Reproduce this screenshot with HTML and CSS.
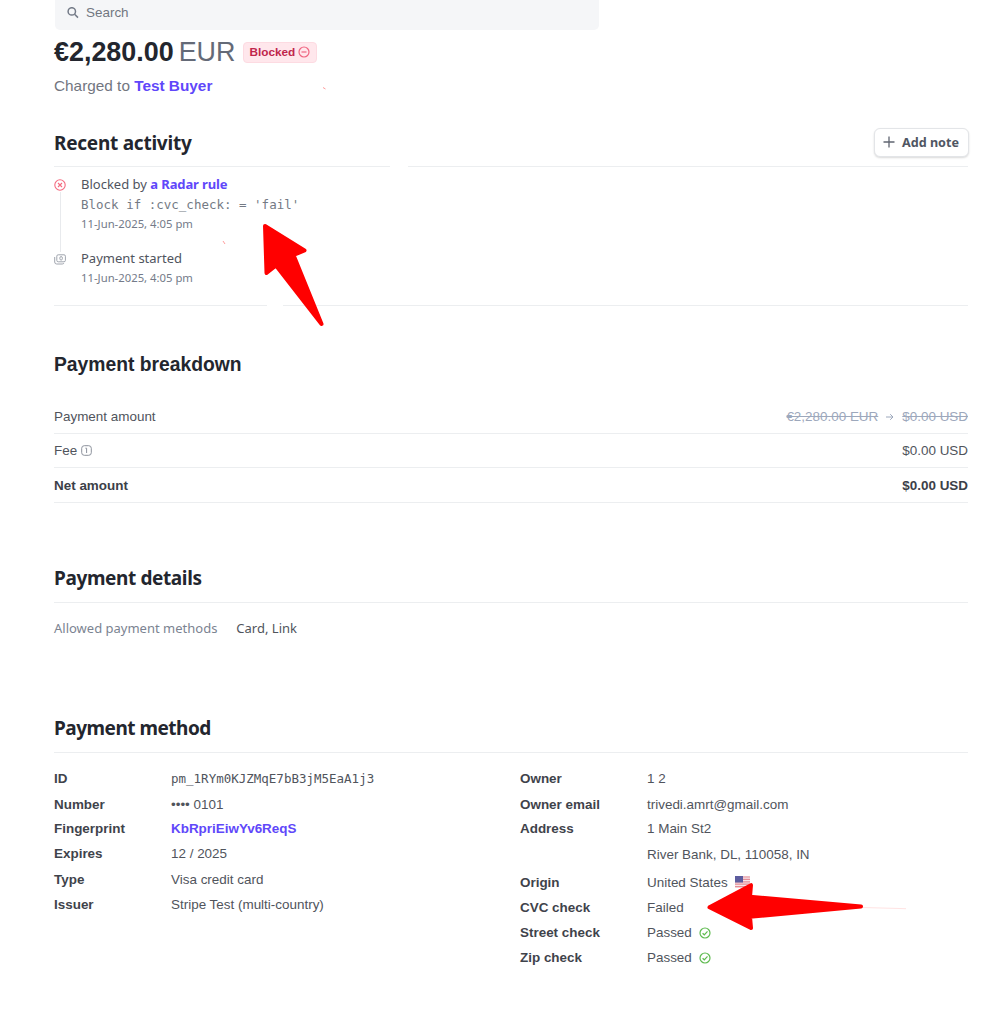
FILE: index.html
```html
<!DOCTYPE html>
<html lang="en">
<head>
<meta charset="utf-8">
<title>Payment</title>
<link rel="stylesheet" href="styles.css">
</head>
<body>
<main class="page">
  <div class="search">
    <svg class="search-icon" width="12" height="12" viewBox="0 0 12 12"><circle cx="4.8" cy="4.4" r="3.7"/><path d="M7.6 7.2L11 10.6"/></svg>
    <span>Search</span>
  </div>
  <header class="summary">
    <div class="amount-row">
      <span class="amount">€2,280.00</span><span class="currency">EUR</span>
      <span class="badge">Blocked
        <svg width="12" height="12" viewBox="0 0 12 12"><circle cx="6" cy="6" r="5"/><path d="M3.5 6h5"/></svg>
      </span>
    </div>
    <p class="charged">Charged to <a>Test Buyer</a></p>
  </header>

  <section class="activity">
    <div class="activity-head">
      <h2 class="humanist recent">Recent activity</h2>
      <button class="note"><svg width="12" height="12" viewBox="0 0 12 12"><path d="M6 .5v11M.5 6h11"/></svg><span>Add note</span></button>
    </div>
    <div class="split split-top"><i></i><i></i></div>
    <div class="timeline">
      <div class="rail">
        <svg class="failed" width="12" height="12" viewBox="0 0 12 12"><circle cx="6" cy="6" r="5.2"/><path d="M4 4l4 4M8 4L4 8"/></svg>
        <span class="rail-line"></span>
        <svg class="cash" width="12" height="11" viewBox="0 0 12 11"><rect x="2.8" y=".8" width="8.6" height="7" rx="1.4"/><path d="M.7 3v5q0 2 2 2h5.5q1.4 0 1.8-1"/><ellipse cx="7.1" cy="4.3" rx="1.3" ry="1.8"/></svg>
      </div>
      <div class="events">
        <div class="event-title blocked">Blocked by <a>a Radar rule</a></div>
        <div class="rule">Block if :cvc_check: = 'fail'</div>
        <div class="date">11-Jun-2025, 4:05 pm</div>
        <div class="event-title started">Payment started</div>
        <div class="date">11-Jun-2025, 4:05 pm</div>
      </div>
    </div>
    <div class="split split-bottom"><i></i><i></i></div>
  </section>

  <section class="breakdown">
    <h2>Payment breakdown</h2>
    <div class="row"><span>Payment amount</span><span class="struck"><s>€2,280.00 EUR</s><svg width="8" height="8" viewBox="0 0 8 8"><path d="M0 4h7M4.2 1.2L7 4 4.2 6.8"/></svg><s>$0.00 USD</s></span></div>
    <div class="row"><span class="fee">Fee <svg width="11" height="11" viewBox="0 0 11 11"><rect x=".7" y=".7" width="9.6" height="9.6" rx="2.6"/><path d="M4.4 3.2h1.2v4.8"/></svg></span><span>$0.00 USD</span></div>
    <div class="row net"><span>Net amount</span><span>$0.00 USD</span></div>
  </section>

  <section class="details">
    <h2 class="humanist details-title">Payment details</h2>
    <div class="allowed"><span class="allowed-label">Allowed payment methods</span><span class="allowed-value">Card, Link</span></div>
  </section>

  <section class="method">
    <h2 class="humanist method-title">Payment method</h2>
    <div class="columns">
      <dl class="left">
        <dt>ID</dt><dd class="mono">pm_1RYm0KJZMqE7bB3jM5EaA1j3</dd>
        <dt>Number</dt><dd>•••• 0101</dd>
        <dt>Fingerprint</dt><dd><a>KbRpriEiwYv6ReqS</a></dd>
        <dt>Expires</dt><dd>12 / 2025</dd>
        <dt>Type</dt><dd>Visa credit card</dd>
        <dt>Issuer</dt><dd>Stripe Test (multi-country)</dd>
      </dl>
      <dl class="right">
        <dt>Owner</dt><dd>1 2</dd>
        <dt>Owner email</dt><dd>trivedi.amrt@gmail.com</dd>
        <dt>Address</dt><dd>1 Main St2</dd>
        <dt></dt><dd>River Bank, DL, 110058, IN</dd>
        <dt>Origin</dt><dd>United States <svg class="flag" width="15" height="12" viewBox="0 0 15 12"><rect width="15" height="12" rx="1" fill="#f7e6e9"/><path d="M0 1h15M0 3.4h15M0 5.8h15M0 8.2h15M0 10.6h15" stroke="#e58d97" stroke-width="1.2"/><rect width="8" height="6.5" fill="#5c5c9e"/></svg></dd>
        <dt>CVC check</dt><dd>Failed</dd>
        <dt>Street check</dt><dd>Passed <svg class="ok" width="12" height="12" viewBox="0 0 12 12"><circle cx="6" cy="6" r="5"/><path d="M3.6 6.2l1.7 1.6 3.2-3.5"/></svg></dd>
        <dt>Zip check</dt><dd>Passed <svg class="ok" width="12" height="12" viewBox="0 0 12 12"><circle cx="6" cy="6" r="5"/><path d="M3.6 6.2l1.7 1.6 3.2-3.5"/></svg></dd>
      </dl>
    </div>
  </section>

  <svg class="annotations" width="998" height="1024" viewBox="0 0 998 1024">
    <g fill="#f00" stroke="#f00" stroke-width="4" stroke-linejoin="round">
      <path d="M265 226L304.5 250.5 293.5 255 321.5 324 276 265.5 266.5 273Z"/>
      <path d="M709.5 907.3L751 885.2 750 896.8 861 906.5 750 916.8 751 928Z"/>
    </g>
    <path d="M863 907.5L906 908.7" stroke="#ffe3e3" stroke-width="1"/>
    <path d="M323 87.5l2.5 1.5M223 241l2 3" stroke="#ff9c9c" stroke-width="1"/>
  </svg>
</main>
</body>
</html>
```
FILE: styles.css
```css
* { box-sizing: border-box; }
body { margin: 0; background: #fff; color: #50545c; font: 13.45px/20px "Liberation Sans", Arial, sans-serif; }
h2, p, dl, dd { margin: 0; }
a { color: #6047fa; font-weight: 700; }
svg { fill: none; flex: none; }
.page { position: relative; width: 998px; height: 1024px; padding: 0 30px 0 54px; overflow: hidden; white-space: nowrap; }

.search { display: flex; align-items: center; gap: 7px; width: 544px; height: 30px; margin-left: 1px; padding: 0 0 5px 12px; background: #f5f6f8; border-radius: 0 0 5px 5px; color: #717681; }
.search-icon { stroke: #747b88; stroke-width: 1.5; }

.summary { height: 98px; }
.amount-row { display: flex; align-items: center; height: 44px; }
.amount { color: #23262e; font-size: 26.9px; font-weight: 700; }
.currency { margin-left: 5px; color: #646a77; font-size: 26.9px; }
.badge { display: flex; align-items: center; gap: 3px; height: 21px; margin-left: 8px; padding: 0 6px 1px 5px; border: 1px solid #fddbe2; border-radius: 4px; background: #ffe7ec; color: #c0264c; font-size: 11.8px; font-weight: 700; }
.badge svg { stroke: #ef6681; stroke-width: 1.2; }
.charged { margin-top: 2px; color: #72767f; font-size: 15.35px; }

h2 { color: #23262e; font-size: 19.3px; line-height: 28px; font-weight: 700; }
.humanist { font-family: "Noto Sans", sans-serif; font-size: 19px; font-weight: 700; }
.recent { letter-spacing: -.25px; }
.activity-head { display: flex; align-items: center; justify-content: space-between; height: 30px; }
.note { display: flex; align-items: center; gap: 7px; width: 95px; height: 29px; margin: -2px -1px 0 0; padding: 0 8px; border: 1px solid #e3e5e8; border-radius: 6px; background: #fff; box-shadow: 0 1px 2px #00000026; color: #505663; font: 700 12.6px "Noto Sans", sans-serif; }
.note svg { stroke: #606571; stroke-width: 1.3; }
.split { display: flex; height: 1px; }
.split i { background: #eceef0; }
.split-top { margin-top: 8px; gap: 18px; }
.split-top i:first-child { width: 336px; }
.split-bottom { gap: 16px; }
.split-bottom i:first-child { width: 213px; }
.split i:last-child { flex: 1; }
.timeline { display: flex; gap: 15px; height: 138px; padding-top: 7px; }
.rail { display: flex; flex-direction: column; align-items: center; width: 12px; padding-top: 5px; }
.failed { stroke: #f46b80; stroke-width: 1.1; }
.rail-line { width: 1px; height: 60px; margin: 1px 0 2px; background: #e8eaed; }
.cash { stroke: #a0a5ae; stroke-width: 1; }
.event-title { color: #50545e; font: 13px/20px "Noto Sans", sans-serif; }
.event-title a { letter-spacing: -.12px; }
.started { margin-top: 14px; }
.rule { height: 20px; color: #747a84; font: 12.5px/22px "DejaVu Sans Mono", monospace; }
.date { color: #747b89; font: 11.3px/20px "Noto Sans", sans-serif; }

.breakdown { padding-top: 45px; }
.breakdown h2 { margin-bottom: 21px; }
.row { display: flex; justify-content: space-between; height: 34px; padding-top: 7px; border-bottom: 1px solid #eceef0; }
.row.net { height: 35px; padding-top: 8px; font-weight: 700; color: #3c4048; }
.struck { display: flex; align-items: center; gap: 8px; height: 20px; color: #9da8bc; }
.struck svg { stroke: #9da8bc; }
.fee svg { vertical-align: -1px; stroke: #8c919c; stroke-width: 1; }

.details { height: 151px; margin-top: 61px; }
.details-title, .method-title { height: 39px; border-bottom: 1px solid #eceef0; letter-spacing: -.38px; }
.method-title { height: 38px; letter-spacing: -.5px; line-height: 26px; }
.allowed { display: flex; gap: 19px; padding-top: 15px; font: 13px/20px "Noto Sans", sans-serif; }
.allowed-label { color: #7b8391; }

.columns { display: flex; padding-top: 13px; }
dl { display: grid; align-content: start; line-height: 25px; }
.left { width: 466px; grid-template: 26px 24px 25px 26px 25px 25px / 117px auto; }
.right { grid-template: 26px 24px 26px 28px 25px 25px 25px 25px / 127px auto; }
dt { font-weight: 700; color: #3f434b; }
.mono { font: 12.5px/25px "DejaVu Sans Mono", monospace; }
.flag { margin-left: 4px; vertical-align: -1px; }
.ok { margin-left: 3px; vertical-align: -2px; stroke: #5fbb50; stroke-width: 1.2; }

.annotations { position: absolute; top: 0; left: 0; }
```
